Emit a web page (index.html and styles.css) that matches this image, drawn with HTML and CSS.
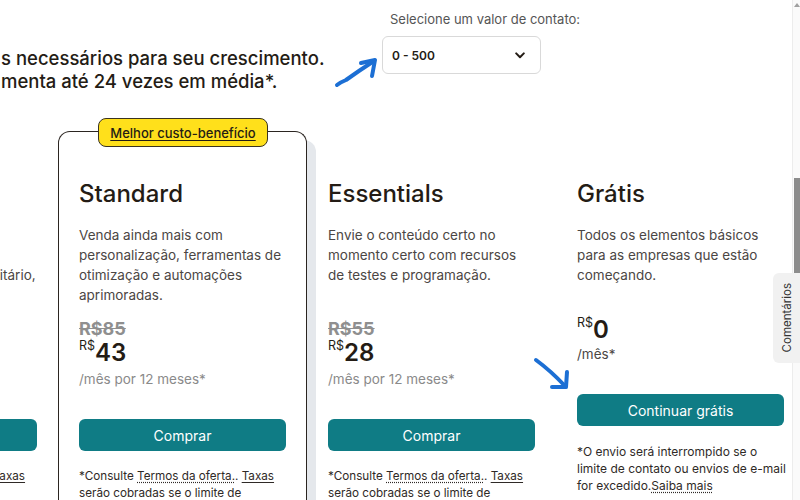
FILE: index.html
```html
<!DOCTYPE html>
<html lang="pt-BR">
<head>
<meta charset="utf-8">
<title>Planos</title>
<link rel="stylesheet" href="styles.css">
</head>
<body>
<div class="page">
  <header class="top">
    <div class="headline">
      <p>s necessários para seu crescimento.</p>
      <p>menta até 24 vezes em média*.</p>
    </div>
    <div class="selector">
      <div class="selector-label">Selecione um valor de contato:</div>
      <div class="select">
        <span>0 - 500</span>
        <svg class="chevron" width="10" height="7" viewBox="0 0 10 7"><path d="M1.2 1.4 L5 5.2 L8.8 1.4" fill="none" stroke="#241c15" stroke-width="2" stroke-linecap="round" stroke-linejoin="round"/></svg>
      </div>
    </div>
  </header>

  <section class="plans">
    <div class="plan">
      <h2 class="plan-title">Premium</h2>
      <p class="plan-desc nowrap">Automação avançada,<br>testes multivariados e<br>um suporte completo prioritário,<br>para equipes.</p>
      <div class="price">
        <div class="strike">R$350</div>
        <div class="amount"><span class="cur">R$</span><span class="num">175</span></div>
        <div class="per">/mês por 12 meses*</div>
      </div>
      <a class="btn">Comprar</a>
      <p class="fine">*Consulte <span class="dotted">Termos da oferta.</span>. <span class="solid">Taxas</span> serão cobradas se o limite de</p>
    </div>

    <div class="plan featured">
      <div class="badge"><span>Melhor custo-benefício</span></div>
      <h2 class="plan-title">Standard</h2>
      <p class="plan-desc">Venda ainda mais com personalização, ferramentas de otimização e automações aprimoradas.</p>
      <div class="price">
        <div class="strike">R$85</div>
        <div class="amount"><span class="cur">R$</span><span class="num">43</span></div>
        <div class="per">/mês por 12 meses*</div>
      </div>
      <a class="btn">Comprar</a>
      <p class="fine">*Consulte <span class="dotted">Termos da oferta.</span>. <span class="solid">Taxas</span> serão cobradas se o limite de</p>
    </div>

    <div class="plan">
      <h2 class="plan-title">Essentials</h2>
      <p class="plan-desc">Envie o conteúdo certo no momento certo com recursos de testes e programação.</p>
      <div class="price">
        <div class="strike">R$55</div>
        <div class="amount"><span class="cur">R$</span><span class="num">28</span></div>
        <div class="per">/mês por 12 meses*</div>
      </div>
      <a class="btn">Comprar</a>
      <p class="fine">*Consulte <span class="dotted">Termos da oferta.</span>. <span class="solid">Taxas</span> serão cobradas se o limite de</p>
    </div>

    <div class="plan free">
      <h2 class="plan-title">Grátis</h2>
      <p class="plan-desc">Todos os elementos básicos para as empresas que estão começando.</p>
      <div class="price">
        <div class="amount"><span class="cur">R$</span><span class="num">0</span></div>
        <div class="per">/mês*</div>
      </div>
      <a class="btn">Continuar grátis</a>
      <p class="fine">*O envio será interrompido se o<br>limite de contato ou envios de e-mail<br>for excedido.<span class="dotted">Saiba mais</span></p>
    </div>
  </section>

  <svg class="arrows" width="800" height="500" viewBox="0 0 800 500">
    <g fill="none" stroke="#1c6fd4" stroke-width="4" stroke-linecap="round" stroke-linejoin="round">
      <path d="M337 85 Q341 82 346 80 Q360 70 374 61"/>
      <path d="M361 63 L375 60 L372 76"/>
      <path d="M536 360 Q551 371 565 386"/>
      <path d="M552 387 L566 387 L567 372"/>
    </g>
  </svg>

  <div class="scrollbar">
    <span class="scroll-arrow"></span>
    <span class="scroll-thumb"></span>
  </div>
  <div class="feedback-tab"><span>Comentários</span></div>
</div>
</body>
</html>
```

FILE: styles.css
```css
* { box-sizing: border-box; }

html, body {
  margin: 0;
  padding: 0;
  background: #ffffff;
}

body {
  width: 800px;
  height: 500px;
  overflow: hidden;
  font-family: "Inter", "Liberation Sans", sans-serif;
  color: #241c15;
}

.page {
  position: relative;
  width: 800px;
  height: 500px;
  overflow: hidden;
}

.top {
  display: grid;
  grid-template-columns: 382px 1fr;
  align-items: start;
  padding-top: 11px;
}

.headline {
  padding-top: 35.5px;
  padding-left: 1px;
}

.headline p {
  margin: 0;
  font-size: 18.5px;
  line-height: 23px;
  font-weight: 500;
  color: #241c15;
  white-space: nowrap;
}

.selector-label {
  font-size: 13px;
  line-height: 16px;
  color: #555555;
  padding-left: 8px;
}

.select {
  margin-top: 9px;
  width: 159px;
  height: 38px;
  border: 1px solid #d9d9d9;
  border-radius: 6px;
  display: flex;
  align-items: center;
  justify-content: space-between;
  padding: 0 15px 0 9px;
  font-size: 12px;
  font-weight: 600;
}

.chevron { display: block; }

.plans {
  display: flex;
  align-items: flex-start;
  margin-left: -191px;
  margin-top: 38.5px;
}

.plan {
  flex: 0 0 249px;
  width: 249px;
  padding: 48px 21px 0 21px;
}

.plan.featured {
  position: relative;
  height: 420px;
  border: 1px solid #2b2521;
  border-bottom: none;
  border-radius: 12px 12px 0 0;
  padding: 47px 20px 0 20px;
  box-shadow: 9px 9px 0 #e5e8ec;
  background: #ffffff;
}

.badge {
  position: absolute;
  top: -14px;
  left: 39px;
  width: 170px;
  height: 29px;
  background: #ffe01b;
  border: 1px solid #3a3320;
  border-radius: 8px;
  display: flex;
  align-items: center;
  justify-content: center;
  font-size: 13px;
  font-weight: 500;
}

.badge span {
  text-decoration: underline;
  text-underline-offset: 2px;
}

.plan-title {
  margin: 0 0 16px;
  font-size: 24px;
  line-height: 30px;
  font-weight: 500;
  color: #241c15;
}

.plan-desc {
  margin: 0;
  min-height: 82px;
  font-size: 13.5px;
  line-height: 20px;
  color: #4b4644;
}

.plan-desc.nowrap { white-space: nowrap; }

.price { margin-top: 12px; }
.free .price { margin-top: 9px; }

.strike {
  font-size: 18px;
  line-height: 20px;
  font-weight: 700;
  color: #8f8f8f;
  text-decoration: line-through;
}

.amount {
  height: 28px;
  line-height: 28px;
  color: #241c15;
}

.cur {
  display: inline-block;
  vertical-align: top;
  font-size: 12.5px;
  line-height: 14px;
}

.num {
  font-size: 24px;
  line-height: 28px;
  font-weight: 600;
}

.per {
  margin-top: 3px;
  font-size: 13.5px;
  line-height: 18px;
  color: #8a8a8a;
}

.free .per { color: #4b4644; margin-top: 1px; }

.btn {
  display: flex;
  align-items: center;
  justify-content: center;
  margin-top: 31px;
  height: 32px;
  border-radius: 6px;
  background: #0f7c85;
  color: #ffffff;
  font-size: 14px;
}

.fine {
  margin: 17px -4px 0 0;
  font-size: 11.7px;
  line-height: 17px;
  color: #2f2a27;
}

.free .fine {
  margin-right: -8px;
  white-space: nowrap;
  font-size: 12px;
}

.dotted {
  text-decoration: underline dotted;
  text-underline-offset: 2px;
}

.solid {
  text-decoration: underline;
  text-underline-offset: 2px;
}

.arrows {
  position: absolute;
  left: 0;
  top: 0;
  pointer-events: none;
}

.scrollbar {
  position: absolute;
  top: 0;
  right: 0;
  width: 8px;
  height: 500px;
  background: #fafafa;
  border-left: 1px solid #ececec;
}

.scroll-arrow {
  position: absolute;
  top: 3px;
  left: 1px;
  width: 0;
  height: 0;
  border-left: 3px solid transparent;
  border-right: 3px solid transparent;
  border-bottom: 4px solid #a0a0a0;
}

.scroll-thumb {
  position: absolute;
  top: 178px;
  left: 1px;
  width: 6px;
  height: 95px;
  background: #8c8c8c;
}

.feedback-tab {
  position: absolute;
  top: 273px;
  right: 0;
  width: 27px;
  height: 90px;
  background: #f1f1f1;
  border-radius: 6px 0 0 6px;
  display: flex;
  align-items: center;
  justify-content: center;
}

.feedback-tab span {
  writing-mode: vertical-rl;
  transform: rotate(180deg);
  font-size: 11.5px;
  color: #333333;
}
```
